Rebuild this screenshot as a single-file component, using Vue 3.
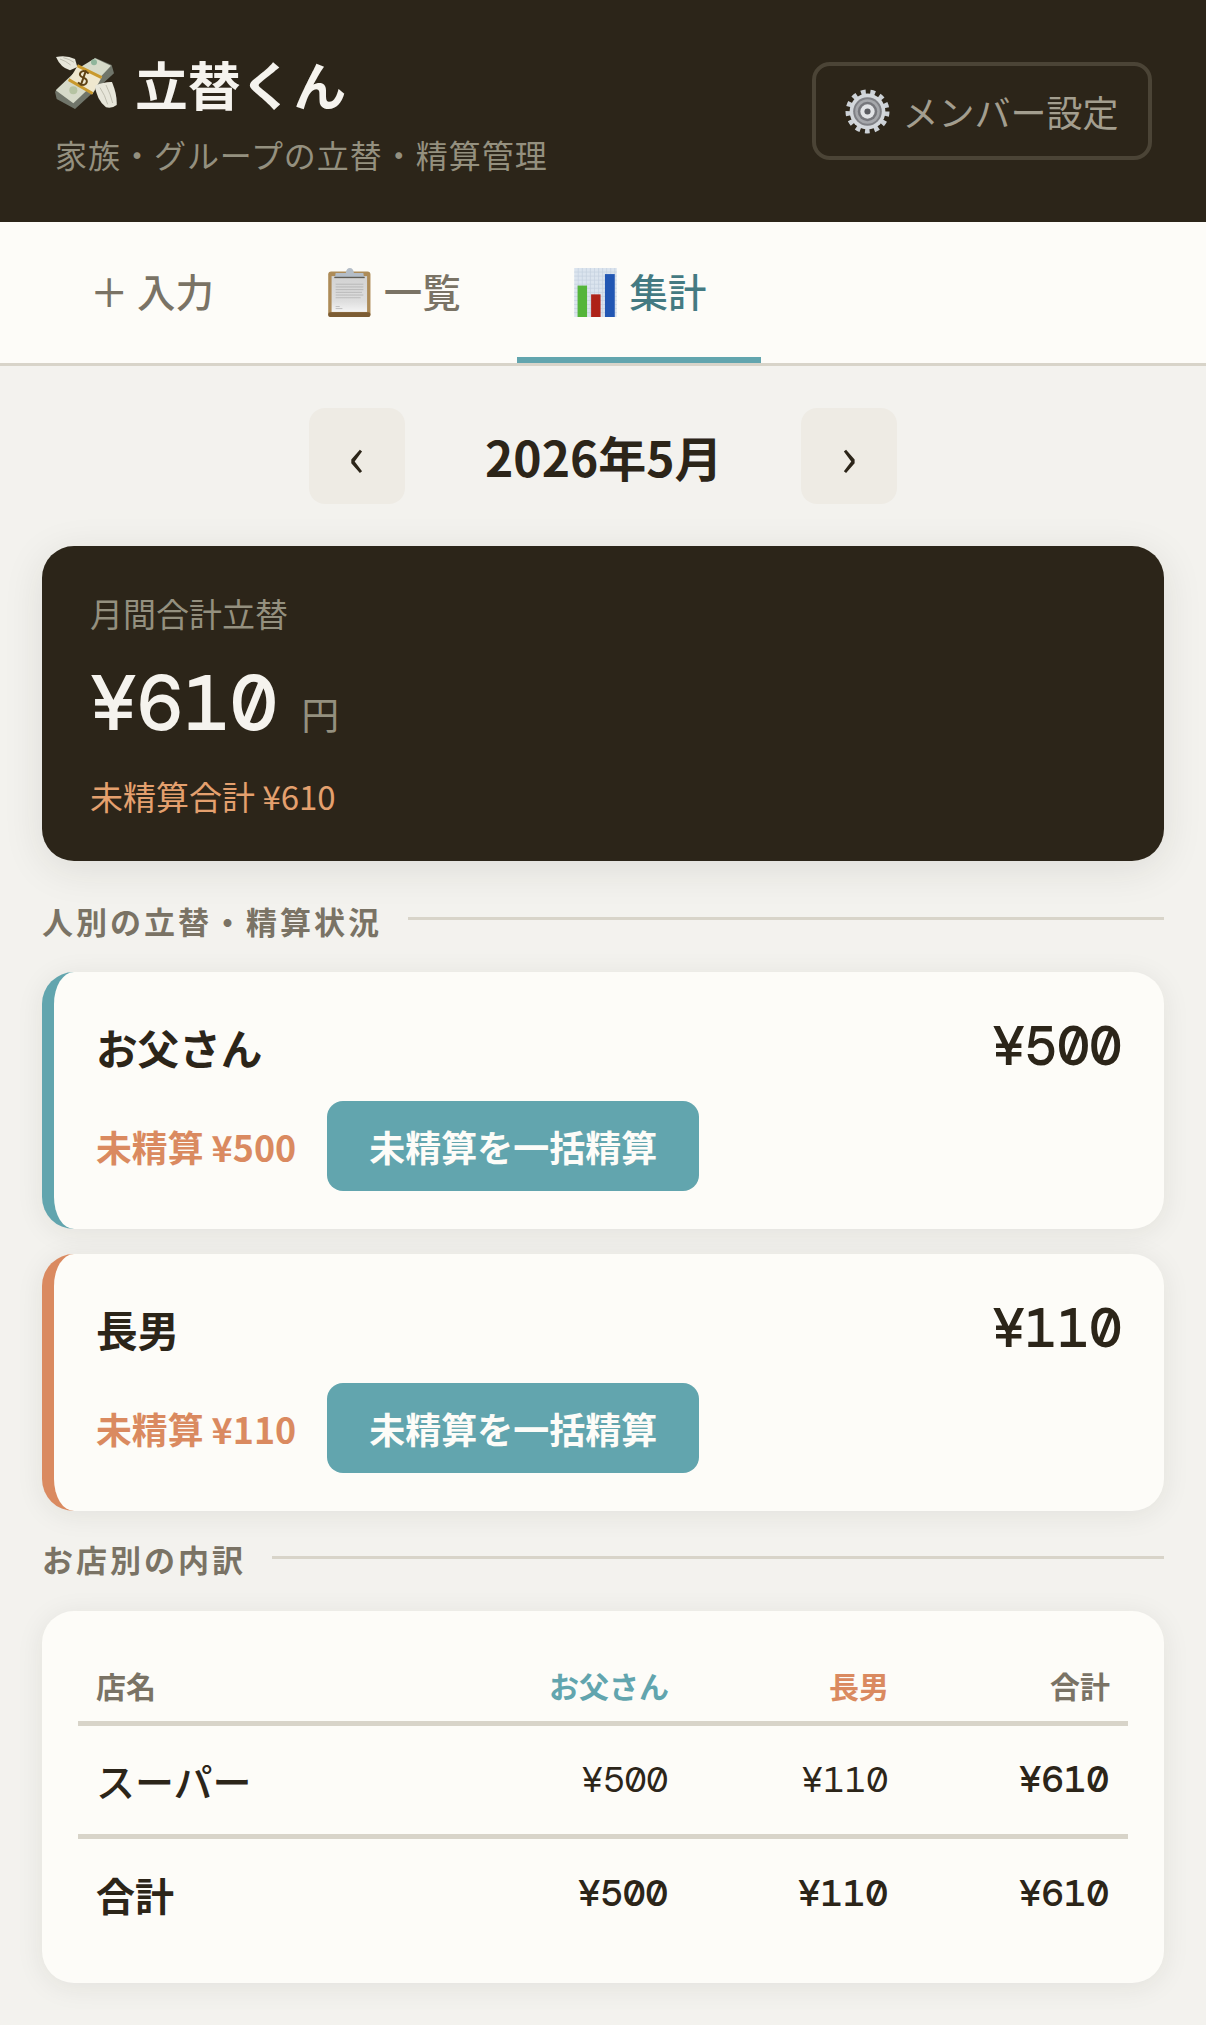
<template>
  <div class="app">
    <header class="header">
      <div>
        <h1 class="title">
          <svg class="logo" viewBox="45 60 186 171">
            <path d="M45 170 L90 135 L165 68 L215 90 L222 115 L105 222 L50 192 Z" fill="#70756a"/>
            <path d="M47 166 L118 98 L165 70 L213 92 L168 140 L100 205 Z" fill="#d6dac9"/>
            <circle cx="162" cy="82" r="9" fill="#8fb59b"/>
            <circle cx="100" cy="166" r="12" fill="#b5c3a2"/>
            <path d="M114 90 L186 125 L157 178 L88 134 Z" fill="#efe8cf"/>
            <path d="M114 88 L187 124 L183 132 L110 96 Z M88 130 L160 172 L156 179 L84 138 Z" fill="#c9992d"/>
            <path d="M146 116 Q132 102 122 112 Q115 122 130 128 Q146 134 138 146 Q128 156 114 142 M138 106 L122 152" fill="none" stroke="#5e4214" stroke-width="6"/>
            <path d="M48 66 Q80 60 105 72 L112 96 L90 106 Q62 98 48 66 Z" fill="#e7e6da"/>
            <path d="M60 72 Q78 78 92 90 M70 68 Q88 72 102 82" stroke="#aaa99a" stroke-width="2" fill="none"/>
            <path d="M165 152 Q192 140 216 141 Q232 180 230 210 Q215 222 198 217 Q170 195 165 152 Z" fill="#e7e6da"/>
            <path d="M180 158 Q195 180 203 208 M198 150 Q212 178 218 204" stroke="#aaa99a" stroke-width="2" fill="none"/>
          </svg>
          <span>立替くん</span>
        </h1>
        <p class="subtitle">家族・グループの立替・精算管理</p>
      </div>
      <button class="member-btn">
        <svg class="gear" viewBox="0 0 44 44">
          <circle cx="22" cy="22" r="19" fill="none" stroke="#ccd1d6" stroke-width="5" stroke-dasharray="4.6 4.58"/>
          <circle cx="22" cy="22" r="17.5" fill="#d3d7db"/>
          <circle cx="22" cy="22" r="14" fill="#7f8085"/>
          <circle cx="22" cy="22" r="12" fill="#a5a7ab"/>
          <circle cx="22" cy="22" r="9.5" fill="#76777c"/>
          <circle cx="22" cy="22" r="7" fill="#e1e3e6"/>
          <circle cx="22" cy="22" r="3" fill="#5a5b60"/>
        </svg>
        <span>メンバー設定</span>
      </button>
    </header>

    <nav class="tabs">
      <div class="tab"><span>＋ 入力</span></div>
      <div class="tab">
        <svg class="tab-icon" viewBox="0 0 126 145">
          <defs>
            <linearGradient id="paper" x1="0" y1="0" x2="0" y2="1">
              <stop offset="0" stop-color="#d2d2d2"/>
              <stop offset="0.7" stop-color="#dedede"/>
              <stop offset="1" stop-color="#f4f4f4"/>
            </linearGradient>
          </defs>
          <rect x="0" y="10" width="125" height="135" rx="9" fill="#ad8b58"/>
          <rect x="10" y="24" width="105" height="106" fill="url(#paper)"/>
          <path d="M22 48h82M22 56h82M22 64h82M22 72h78M22 80h82M22 88h74M22 114h12M22 120h20" stroke="#aaa" stroke-width="2"/>
          <rect x="0" y="131" width="125" height="14" rx="6" fill="#7c5c33"/>
          <path d="M20 28 L22 15 H52 Q54 0 64 0 T76 15 H104 L106 28 Z" fill="#b4bdc7"/>
          <rect x="18" y="26" width="90" height="4" fill="#5f5c55"/>
        </svg>
        <span>一覧</span>
      </div>
      <div class="tab active">
        <svg class="tab-icon" viewBox="0 0 126 145">
          <rect width="126" height="145" fill="#dbe4ee"/>
          <path d="M0 12h126M0 24h126M0 36h126M0 48h126M0 60h126M0 72h126M0 84h126M0 96h126M0 108h126M0 120h126M0 132h126M12 0v145M24 0v145M36 0v145M48 0v145M60 0v145M72 0v145M84 0v145M96 0v145M108 0v145M120 0v145" stroke="#c3d0df" stroke-width="2"/>
          <rect x="10" y="52" width="28" height="93" fill="#54b53a"/>
          <rect x="50" y="78" width="28" height="67" fill="#ae2218"/>
          <rect x="91" y="18" width="29" height="127" fill="#2156b3"/>
        </svg>
        <span>集計</span>
      </div>
    </nav>

    <main class="main">
      <div class="month-nav">
        <button class="nav-btn">‹</button>
        <h2 class="month">2026年5月</h2>
        <button class="nav-btn">›</button>
      </div>

      <section class="summary">
        <div class="summary-label">月間合計立替</div>
        <div class="summary-amount"><span class="mono">¥610</span><small>円</small></div>
        <div class="summary-unpaid">未精算合計 ¥610</div>
      </section>

      <div class="section-head">
        <span class="wide">人別の立替・精算状況</span>
      </div>

      <div class="people">
        <div v-for="p in people" :key="p.name" class="person" :style="{ borderLeftColor: p.color }">
          <div class="person-top">
            <span class="person-name">{{ p.name }}</span>
            <span class="person-amount mono">¥{{ p.amount }}</span>
          </div>
          <div class="person-bottom">
            <span class="unpaid">未精算 ¥{{ p.amount }}</span>
            <button class="settle">未精算を一括精算</button>
          </div>
        </div>
      </div>

      <div class="section-head store-head">
        <span class="wide">お店別の内訳</span>
      </div>

      <section class="store-card">
        <table class="table">
          <colgroup>
            <col style="width: 388.5px" />
            <col style="width: 220.5px" />
            <col style="width: 220px" />
            <col style="width: 221px" />
          </colgroup>
          <thead>
            <tr>
              <th class="left">店名</th>
              <th class="blue">お父さん</th>
              <th class="orange">長男</th>
              <th>合計</th>
            </tr>
          </thead>
          <tbody>
            <tr>
              <td class="left name">スーパー</td>
              <td class="mono">¥500</td>
              <td class="mono">¥110</td>
              <td class="mono strong">¥610</td>
            </tr>
          </tbody>
          <tfoot>
            <tr>
              <td class="left name total">合計</td>
              <td class="mono strong">¥500</td>
              <td class="mono strong">¥110</td>
              <td class="mono strong">¥610</td>
            </tr>
          </tfoot>
        </table>
      </section>
    </main>
  </div>
</template>

<script setup>
const people = [
  { name: 'お父さん', amount: 500, color: '#62a5ae' },
  { name: '長男', amount: 110, color: '#da8a60' }
]
</script>

<style>
body {
  background: #f3f2ee;
}
</style>

<style scoped>
.app {
  width: 1206px;
  min-height: 2025px;
  background: #f3f2ee;
  color: #2c2519;
  font-family: "Noto Sans CJK JP", "Noto Sans", sans-serif;
}

.mono {
  font-family: "DM Mono", monospace;
}

.header {
  height: 222px;
  box-sizing: border-box;
  background: #2c2519;
  padding: 0 54px 0 55px;
  display: flex;
  align-items: center;
  justify-content: space-between;
}

.title {
  margin: 0;
  display: flex;
  align-items: center;
  gap: 18px;
  font-size: 52.8px;
  line-height: 76px;
  font-weight: 700;
  color: #f5f3ee;
}

.logo {
  width: 62px;
  height: 57px;
}

.subtitle {
  margin: 10px 0 0;
  font-size: 32px;
  line-height: 46px;
  letter-spacing: 0.97px;
  color: #94907f;
}

.member-btn {
  width: 340px;
  height: 98px;
  box-sizing: border-box;
  background: transparent;
  border: 4px solid #4b4436;
  border-radius: 18px;
  display: flex;
  align-items: center;
  justify-content: center;
  gap: 12px;
  font: inherit;
  font-size: 36px;
  color: #a39e8f;
}

.gear {
  width: 45px;
  height: 45px;
}

.tabs {
  height: 144px;
  box-sizing: border-box;
  background: #fdfcf8;
  border-bottom: 3px solid #d8d4c9;
  display: flex;
  padding-left: 32px;
  gap: 2px;
}

.tab {
  height: 141px;
  box-sizing: border-box;
  padding: 0 54px 0 58px;
  display: flex;
  align-items: center;
  gap: 13px;
  font-size: 38.4px;
  font-weight: 500;
  color: #7a7365;
  border-bottom: 6px solid transparent;
}

.tab.active {
  padding: 0 55px 0 57px;
  color: #447a82;
  border-bottom-color: #62a5ae;
}

.tab-icon {
  width: 43px;
  height: 49px;
  margin-top: 6px;
}

.main {
  padding: 42px 42px 0;
}

.month-nav {
  display: flex;
  justify-content: center;
  align-items: center;
  gap: 80px;
}

.nav-btn {
  width: 96px;
  height: 96px;
  padding: 0 0 8px;
  background: #eeebe4;
  border: none;
  border-radius: 16px;
  font: inherit;
  font-size: 56px;
  color: #2c2519;
}

.month {
  margin: 0;
  width: 236px;
  box-sizing: border-box;
  padding-right: 3px;
  font-size: 48px;
  font-weight: 700;
  text-align: center;
  white-space: nowrap;
}

.summary {
  margin-top: 42px;
  height: 315px;
  box-sizing: border-box;
  padding: 43px 48px;
  background: #2c2519;
  border-radius: 32px;
  box-shadow: 0 8px 40px rgba(44, 37, 25, 0.1);
}

.summary-label {
  font-size: 33px;
  line-height: 48px;
  color: #94907f;
}

.summary-amount {
  margin-top: 9px;
  color: #f5f3ee;
  font-size: 78px;
  line-height: 100px;
  font-weight: 700;
}

.summary-amount small {
  margin-left: 24px;
  vertical-align: 1.5px;
  font-family: "Noto Sans CJK JP", sans-serif;
  font-size: 38px;
  font-weight: 400;
  color: #94907f;
}

.summary-unpaid {
  margin-top: 9px;
  font-size: 33px;
  line-height: 48px;
  color: #e4a06e;
}

.section-head {
  margin-top: 38px;
  display: flex;
  align-items: center;
  gap: 26px;
  font-size: 31px;
  line-height: 44px;
  font-weight: 700;
  color: #7a7365;
}

.section-head::after {
  content: "";
  flex: 1;
  height: 3px;
  margin-bottom: 5px;
  background: #d8d4c9;
}

.wide {
  letter-spacing: 3px;
}

.people {
  margin-top: 29px;
  display: flex;
  flex-direction: column;
  gap: 25px;
}

.person {
  height: 257px;
  box-sizing: border-box;
  padding: 45px 42px 38px 42px;
  background: #fdfcf8;
  border-left: 12px solid;
  border-radius: 32px;
  box-shadow: 0 4px 28px rgba(44, 37, 25, 0.08);
}

.person-top {
  display: flex;
  justify-content: space-between;
  align-items: flex-start;
}

.person-name {
  font-size: 41.6px;
  line-height: 60px;
  font-weight: 700;
}

.person-amount {
  font-size: 54px;
  line-height: 60px;
  font-weight: 700;
}

.person-bottom {
  margin-top: 24px;
  display: flex;
  align-items: center;
  gap: 31px;
}

.unpaid {
  font-size: 35.84px;
  font-weight: 700;
  color: #da8a60;
}

.settle {
  width: 372px;
  height: 90px;
  background: #62a5ae;
  border: none;
  border-radius: 16px;
  font: inherit;
  font-size: 36px;
  font-weight: 700;
  color: #fdfcf8;
}

.store-head {
  margin-top: 26px;
}

.store-head::after {
  margin-bottom: 3px;
}

.store-card {
  margin-top: 30px;
  height: 372px;
  box-sizing: border-box;
  padding: 36px 36px 0;
  background: #fdfcf8;
  border-radius: 32px;
  box-shadow: 0 4px 28px rgba(44, 37, 25, 0.08);
}

.table {
  width: 1050px;
  border-collapse: collapse;
  table-layout: fixed;
}

.table th {
  height: 76px;
  padding: 2px 18px 0;
  box-sizing: border-box;
  font-size: 30px;
  font-weight: 700;
  text-align: right;
  color: #7a7365;
  border-bottom: 5px solid #d8d4c9;
}

.table td {
  height: 108px;
  padding: 0 18px;
  font-size: 36px;
  text-align: right;
}

.table td.mono {
  padding-right: 19px;
}

.table tfoot td {
  height: 110px;
  border-top: 5px solid #d8d4c9;
}

.table .left {
  text-align: left;
}

.table .name {
  font-family: "Noto Sans CJK JP", sans-serif;
  font-size: 39px;
  font-weight: 500;
}

.table .total {
  font-weight: 700;
}

.table .strong {
  font-size: 37.5px;
  font-weight: 700;
}

.table .blue {
  color: #62a5ae;
}

.table .orange {
  color: #da8a60;
}

button {
  cursor: pointer;
}
</style>
